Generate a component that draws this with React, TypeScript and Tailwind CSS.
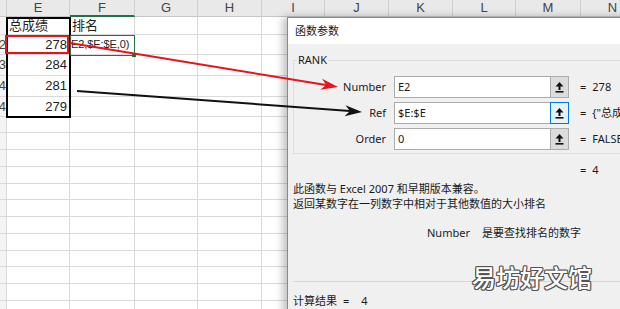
import React from "react";

const cols = [
  { name: "", w: "w-[7px]" },
  { name: "E", w: "w-[63px]" },
  { name: "F", w: "w-[65px]" },
  { name: "G", w: "w-[63px]" },
  { name: "H", w: "w-[64px]" },
  { name: "I", w: "w-[63px]" },
  { name: "J", w: "w-[64px]" },
  { name: "K", w: "w-[64px]" },
  { name: "L", w: "w-[63px]" },
  { name: "M", w: "w-[65px]" },
  { name: "N", w: "w-[64px]" },
];

const rowHeights = [
  "h-[18px]", "h-[20px]", "h-[21px]", "h-[21px]", "h-[20px]", "h-[16px]", "h-[17px]", "h-[17px]",
  "h-[17px]", "h-[16px]", "h-[17px]", "h-[17px]", "h-[17px]", "h-[16px]", "h-[17px]", "h-[17px]", "h-[17px]",
];

const rowNums = ["", "2", "3", "4", "4"];
const colE = ["总成绩", "278", "284", "281", "279"];
const colF = ["排名", "E2,$E:$E,0)"];

const sheetFont = "font-['Liberation_Sans','Noto_Sans_CJK_SC',sans-serif]";
const uiFont = "font-['Noto_Sans','Noto_Sans_CJK_SC',sans-serif]";

function CollapseIcon() {
  return (
    <svg width="9" height="11" viewBox="0 0 9 11">
      <polygon points="4.5,0 8.5,4.5 0.5,4.5" fill="#111" />
      <rect x="3.5" y="4" width="2" height="4" fill="#111" />
      <rect x="0.5" y="9" width="8" height="1.6" fill="#111" />
    </svg>
  );
}

function ArgRow({ label, value, result, focused }: { label: string; value: string; result: string; focused?: boolean }) {
  return (
    <div className="flex h-[22px] items-center">
      <span className="w-[92px] shrink-0 text-right">{label}</span>
      <div className="ml-[8px] flex h-[22px] w-[157px] shrink-0 items-center border border-[#ababab] bg-white pl-[3px]">{value}</div>
      <div
        className={
          focused
            ? "ml-[-1px] flex h-[22px] w-[19px] shrink-0 items-center justify-center border border-[#0078d7] bg-[#e5f1fb]"
            : "flex h-[22px] w-[18px] shrink-0 items-center justify-center border border-l-0 border-[#adadad] bg-[#dcdcdc]"
        }
      >
        <CollapseIcon />
      </div>
      <span className="ml-[11px] shrink-0">=</span>
      <span className="ml-[6px] shrink-0 whitespace-nowrap">{result}</span>
    </div>
  );
}

export default function App() {
  return (
    <div className="relative h-[309px] w-[620px] overflow-hidden bg-white">
      {/* sheet */}
      <div className={`flex w-[700px] flex-col ${sheetFont} text-[12px] text-[#222]`}>
        <div className="flex h-[17px] bg-[#e9e9e9]">
          {cols.map((c, i) => (
            <div
              key={i}
              className={`${c.w} flex shrink-0 items-center justify-center border-r border-[#cfcfcf] text-[13px] text-[#444] ${
                c.name === "F" ? "border-b-2 border-b-[#217346]" : "border-b border-b-[#c6c6c6]"
              }`}
            >
              {c.name}
            </div>
          ))}
        </div>
        {rowHeights.map((h, r) => (
          <div key={r} className={`flex ${h}`}>
            {cols.map((c, i) => {
              let content: React.ReactNode = null;
              let align = "justify-start";
              let extra = "px-[2px]";
              if (i === 0) {
                content = rowNums[r] ?? "";
                align = "justify-end";
                extra = "bg-[#f4f4f4] text-[13px] text-[#444]";
              } else if (i === 1 && colE[r]) {
                content = colE[r];
                align = r === 0 ? "justify-start" : "justify-end";
                extra = "px-[2px] text-[13px]";
              } else if (i === 2 && colF[r]) {
                content = colF[r];
                extra = r === 1 ? "pl-[1px] text-[11px] tracking-[-0.1px]" : "px-[2px] text-[13px]";
              }
              return (
                <div
                  key={i}
                  className={`${c.w} flex shrink-0 items-center overflow-hidden whitespace-nowrap border-b border-r border-[#dadada] ${align} ${extra}`}
                >
                  {content}
                </div>
              );
            })}
          </div>
        ))}
      </div>

      {/* selection marks */}
      <div className="pointer-events-none absolute left-[6px] top-[17px] h-[101px] w-[65px] border-2 border-black" />
      <div className="pointer-events-none absolute left-[5px] top-[35px] h-[19px] w-[64px] border-2 border-[#e0161b]" />
      <div className="pointer-events-none absolute left-[70px] top-[35px] h-[21px] w-[65px] border-[1.5px] border-[#217346]" />
      <div className="pointer-events-none absolute left-[132px] top-[53px] h-[4px] w-[4px] bg-[#217346]" />

      {/* dialog window */}
      <div className={`absolute left-[287px] top-[17px] h-[300px] w-[345px] overflow-hidden border border-[#8a8a8a] bg-[#f0f0f0] shadow-[-4px_0_8px_rgba(0,0,0,0.25)] ${uiFont} text-[11px] text-[#1a1a1a]`}>
        <div className="flex h-[26px] items-center bg-white pl-[7px]">函数参数</div>
        <div className="px-[5px]">
          <div className="relative mt-[16px] border border-[#dcdcdc] pb-[3px] pt-[15px]">
            <span className="absolute left-[3px] top-[-9px] bg-[#f0f0f0] px-[1px] leading-[16px]">RANK</span>
            <div className="flex flex-col gap-[4px]">
              <ArgRow label="Number" value="E2" result="278" />
              <ArgRow label="Ref" value="$E:$E" result={'{"总成'} focused />
              <ArgRow label="Order" value="0" result="FALSE" />
            </div>
          </div>
          <div className="mt-[8px] flex h-[16px] items-center pl-[287px]">
            <span>=</span>
            <span className="ml-[6px]">4</span>
          </div>
          <div className="mt-[3px] leading-[15px]">
            <p>此函数与 Excel 2007 和早期版本兼容。</p>
            <p>返回某数字在一列数字中相对于其他数值的大小排名</p>
          </div>
          <div className="mt-[14px] flex h-[16px] items-center pl-[134px]">
            <span>Number</span>
            <span className="ml-[12px]">是要查找排名的数字</span>
          </div>
          <div className="mt-[40px] border-t border-[#d5d5d5]" />
          <div className="mt-[11px] flex h-[16px] items-center">
            <span>计算结果</span>
            <span className="ml-[6px]">=</span>
            <span className="ml-[12px]">4</span>
          </div>
        </div>
      </div>

      {/* watermark */}
      <div className="pointer-events-none absolute left-[472px] top-[262px] font-['Noto_Sans_CJK_SC',sans-serif] text-[24px] font-medium leading-[30px] text-white [text-shadow:1px_0_#555,-1px_0_#555,0_1px_#555,0_-1px_#555,1px_1px_#555,-1px_-1px_#555,1px_-1px_#555,-1px_1px_#555]">
        易坊好文馆
      </div>

      {/* arrows */}
      <svg className="pointer-events-none absolute left-0 top-0" width="620" height="309">
        <line x1="70" y1="43" x2="326" y2="85" stroke="#e8141c" strokeWidth="2" />
        <polygon points="338,87 320.3,89.7 326.2,85.1 322.1,78.8" fill="#e8141c" />
        <line x1="77" y1="91" x2="350" y2="111" stroke="#111" strokeWidth="2" />
        <polygon points="362,112 344.6,116.2 350,111.1 345.5,105.3" fill="#111" />
      </svg>
    </div>
  );
}
